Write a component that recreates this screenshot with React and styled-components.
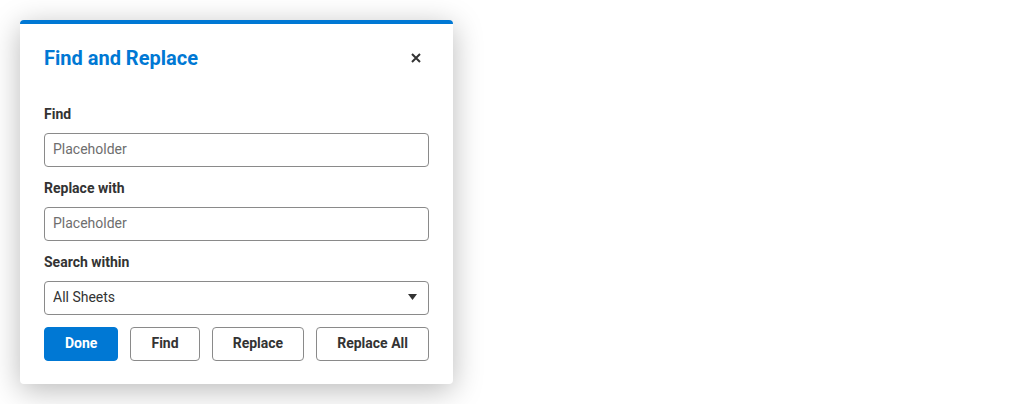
import React from 'react';
import styled, { createGlobalStyle } from 'styled-components';

const GlobalStyle = createGlobalStyle`
    body {
        margin: 0;
        background: #ffffff;
        font-family: Roboto, "Liberation Sans", sans-serif;
    }
`

const Page = styled.div`
    padding: 20px;
`

const Dialog = styled.div`
    width: 433px;
    box-sizing: border-box;
    background: #ffffff;
    border-top: 4px solid #0078d4;
    border-radius: 4px;
    box-shadow: 0 6px 30px rgba(0, 0, 0, 0.28);
    padding: 20px 24px 23px;
`

const Header = styled.div`
    display: flex;
    align-items: center;
    justify-content: space-between;
    height: 28px;
    margin-bottom: 32px;
`

const Title = styled.h2`
    margin: 0;
    font-size: 20px;
    font-weight: 700;
    color: #0078d4;
`

const CloseButton = styled.button`
    display: flex;
    align-items: center;
    justify-content: center;
    width: 24px;
    height: 24px;
    padding: 0;
    margin-right: 1px;
    border: 0;
    background: transparent;
    cursor: pointer;
`

const Field = styled.div`
    display: flex;
    flex-direction: column;
    margin-bottom: ${(p) => (p.last ? '0' : '11px')};
`

const Label = styled.label`
    font-size: 14px;
    line-height: 20px;
    font-weight: 700;
    color: #333333;
    margin-bottom: 9px;
`

const TextInput = styled.input`
    box-sizing: border-box;
    height: 34px;
    padding: 0 8px 2px;
    border: 1px solid #8a8a8a;
    border-radius: 4px;
    font-family: inherit;
    font-size: 14px;
    color: #333333;
    outline: 0;
    &::placeholder {
        color: #6e6e6e;
    }
`

const SelectWrap = styled.div`
    position: relative;
`

const Select = styled.select`
    box-sizing: border-box;
    width: 100%;
    height: 34px;
    padding: 0 30px 2px 8px;
    border: 1px solid #8a8a8a;
    border-radius: 4px;
    background: #ffffff;
    font-family: inherit;
    font-size: 14px;
    color: #333333;
    appearance: none;
    outline: 0;
`

const Caret = styled.svg`
    position: absolute;
    right: 12px;
    top: 13px;
    pointer-events: none;
`

const Actions = styled.div`
    display: flex;
    justify-content: space-between;
    margin-top: 12px;
`

const Button = styled.button`
    box-sizing: border-box;
    height: 34px;
    padding: 0 20px 2px;
    border-radius: 4px;
    font-family: inherit;
    font-size: 14px;
    font-weight: 700;
    cursor: pointer;
    border: 1px solid ${(p) => (p.$primary ? '#0078d4' : '#8a8a8a')};
    background: ${(p) => (p.$primary ? '#0078d4' : '#ffffff')};
    color: ${(p) => (p.$primary ? '#ffffff' : '#333333')};
`

const App = () => {
    return (
        <Page>
            <GlobalStyle />
            <Dialog>
                <Header>
                    <Title>Find and Replace</Title>
                    <CloseButton aria-label="Close">
                        <svg width="10" height="10" viewBox="0 0 10 10">
                            <path d="M1 1 L9 9 M9 1 L1 9" stroke="#333" strokeWidth="2" />
                        </svg>
                    </CloseButton>
                </Header>
                <Field>
                    <Label>Find</Label>
                    <TextInput placeholder="Placeholder" />
                </Field>
                <Field>
                    <Label>Replace with</Label>
                    <TextInput placeholder="Placeholder" />
                </Field>
                <Field last>
                    <Label>Search within</Label>
                    <SelectWrap>
                        <Select defaultValue="all">
                            <option value="all">All Sheets</option>
                            <option value="current">Current Sheet</option>
                        </Select>
                        <Caret width="9" height="6" viewBox="0 0 9 6">
                            <path d="M0 0 H9 L4.5 6 Z" fill="#333" />
                        </Caret>
                    </SelectWrap>
                </Field>
                <Actions>
                    <Button $primary>Done</Button>
                    <Button>Find</Button>
                    <Button>Replace</Button>
                    <Button>Replace All</Button>
                </Actions>
            </Dialog>
        </Page>
    );
}

export default App;
